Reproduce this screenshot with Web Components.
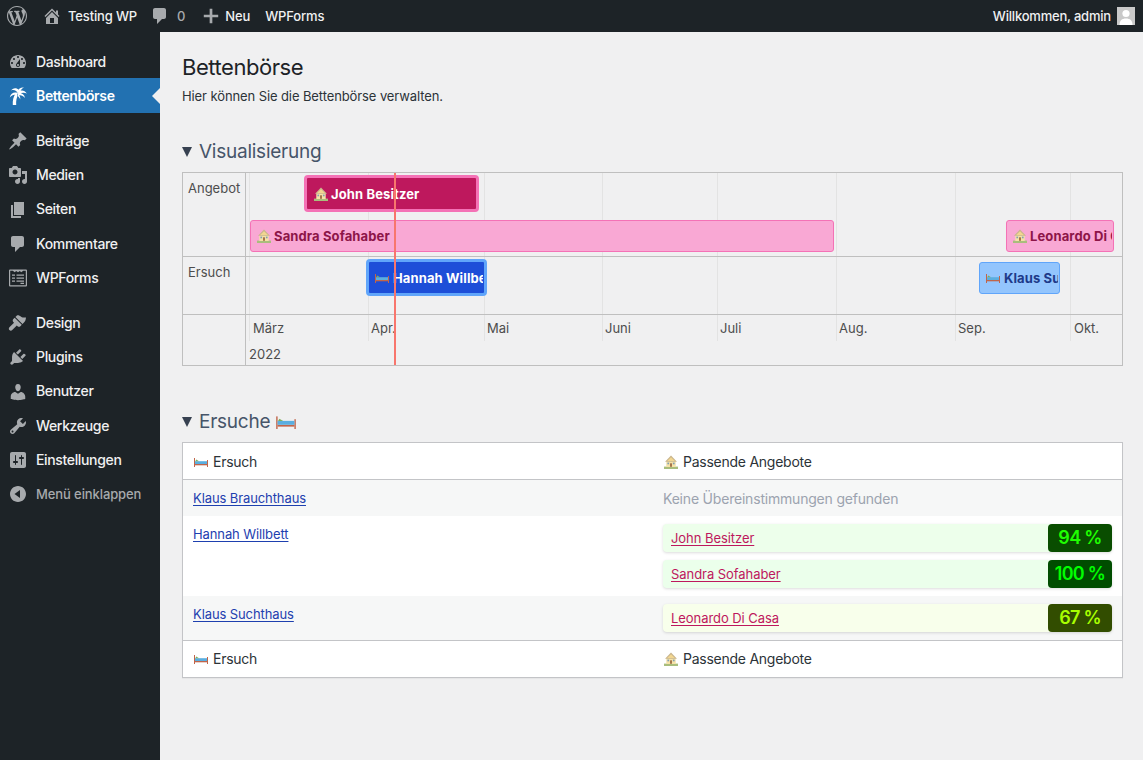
<!DOCTYPE html>
<html lang="de">
<head>
<meta charset="utf-8">
<title>Bettenbörse</title>
<style>
  html, body { margin: 0; padding: 0; height: 100%; }
  body { background: #f0f0f1; font-family: Inter, "Liberation Sans", sans-serif; overflow: hidden; }
</style>
</head>
<body>
<wp-admin-bar></wp-admin-bar>
<wp-shell>
  <wp-sidebar slot="side"></wp-sidebar>
  <page-head title="Bettenbörse" sub="Hier können Sie die Bettenbörse verwalten."></page-head>
  <fold-section label="Visualisierung" gap="34">
    <time-line></time-line>
  </fold-section>
  <fold-section label="Ersuche" bed gap="43">
    <request-table></request-table>
  </fold-section>
</wp-shell>

<script>
// dashicons, 20x20
const ICONS = {
    wp: 'M20 10c0-5.51-4.49-10-10-10C4.48 0 0 4.49 0 10c0 5.52 4.48 10 10 10 5.51 0 10-4.48 10-10zM7.78 15.37L4.37 6.22c.55-.02 1.17-.08 1.17-.08.5-.06.44-1.13-.06-1.11 0 0-1.45.11-2.37.11-.18 0-.37 0-.58-.01C4.12 2.69 6.87 1.11 10 1.11c2.33 0 4.45.87 6.05 2.34-.68-.11-1.65.39-1.65 1.58 0 .74.45 1.36.9 2.1.35.61.55 1.36.55 2.46 0 1.49-1.4 5-1.4 5l-3.03-8.37c.54-.02.82-.17.82-.17.5-.05.44-1.25-.06-1.22 0 0-1.44.12-2.38.12-.87 0-2.33-.12-2.33-.12-.5-.03-.56 1.2-.06 1.22l.92.08 1.26 3.41zM17.41 10c.24-.64.74-1.87.43-4.25.7 1.29 1.05 2.71 1.05 4.25 0 3.29-1.73 6.24-4.4 7.78.97-2.59 1.94-5.2 2.92-7.78zM6.1 18.09C3.12 16.65 1.11 13.53 1.11 10c0-1.3.23-2.48.72-3.59C3.25 10.3 4.67 14.2 6.1 18.09zm4.03-6.63l2.58 6.98c-.86.29-1.76.45-2.71.45-.79 0-1.57-.11-2.29-.33.81-2.38 1.62-4.74 2.42-7.1z',
    home: 'M16 8.5l1.53 1.53-1.06 1.06L10 4.62l-6.47 6.47-1.06-1.06L10 2.5l4 4v-2h2v4zm-6-2.46l6 5.99V18H4v-5.97zM12 17v-5H8v5h4z',
    comment: 'M5 2h9c1.1 0 2 .9 2 2v7c0 1.1-.9 2-2 2h-2l-5 5v-5H5c-1.1 0-2-.9-2-2V4c0-1.1.9-2 2-2z',
    plus: 'M18 8.5v3h-6.500V18h-3v-6.500H2v-3h6.500V2h3v6.500z',
    dashboard: 'M3.76 16h12.48c1.1-1.37 1.76-3.11 1.76-5 0-4.42-3.58-8-8-8s-8 3.58-8 8c0 1.89.66 3.63 1.76 5zM10 4c.55 0 1 .45 1 1s-.45 1-1 1-1-.45-1-1 .45-1 1-1zM6 6c.55 0 1 .45 1 1s-.45 1-1 1-1-.45-1-1 .45-1 1-1zm8 0c.55 0 1 .45 1 1s-.45 1-1 1-1-.45-1-1 .45-1 1-1zm-5.37 5.55L12 7v6c0 1.1-.9 2-2 2s-2-.9-2-2c0-.57.24-1.08.63-1.45zM4 10c.55 0 1 .45 1 1s-.45 1-1 1-1-.45-1-1 .45-1 1-1zm12 0c.55 0 1 .45 1 1s-.45 1-1 1-1-.45-1-1 .45-1 1-1zm-5 3c0-.55-.45-1-1-1s-1 .45-1 1 .45 1 1 1 1-.45 1-1z',
    palm: 'M7.600 7.500C5.400 10.600 4.500 14.600 4.800 19h3.400C7.900 15 8.600 11.200 10.400 8zM10 8C9 4.800 6 3.200 3 4.600 4.500 1.800 8.500 1.200 11 4zM9.500 7C6 5.800 2.600 7.400 1.800 11.500 3.500 9.300 6 8.200 9.500 8.500zM9.500 5.500C10.500 2.600 13 1 16 1.500 14 2.500 12.500 4 11.800 6.500zM10 5.800C13 3.800 16.800 4.200 18.800 7.500 16.500 6.500 13.500 6.600 11 8zM10 7C13 6.400 16.500 8 17 12 15.500 10 13 9 10.500 9zM9.500 8c1.800.7 3 2.800 2.800 5.500C11.500 11.800 10.500 10.300 9 9.500z',
    post: 'M10.44 3.02l1.82-1.82 6.36 6.35-1.83 1.82c-1.05-.68-2.48-.57-3.41.36l-.75.75c-.92.93-1.04 2.35-.35 3.41l-1.83 1.82-2.41-2.41-2.8 2.79c-.42.42-3.38 2.71-3.8 2.29s1.86-3.39 2.28-3.81l2.79-2.79L4.1 9.36l1.83-1.82c1.05.69 2.48.57 3.4-.36l.75-.75c.93-.92 1.05-2.35.36-3.41z',
    media: 'M13 11V4c0-.55-.45-1-1-1h-1.67L9 1H5L3.67 3H2c-.55 0-1 .45-1 1v7c0 .55.45 1 1 1h10c.55 0 1-.45 1-1zM7 4.5c1.38 0 2.5 1.12 2.5 2.5S8.38 9.5 7 9.5 4.5 8.38 4.5 7 5.62 4.5 7 4.5zM14 6h5v10.5c0 1.38-1.12 2.5-2.5 2.5S14 17.88 14 16.5s1.12-2.5 2.500-2.500c.17 0 .34.02.5.05V9h-3V6zm-4 8.05V13h2v3.500c0 1.38-1.12 2.5-2.5 2.5S7 17.88 7 16.5 8.12 14 9.500 14c.17 0 .34.02.5.05z',
    page: 'M6 15V2h10v13H6zm-1 1h8v2H3V5h2v11z',
    forms: 'M2 1.500h16A1 1 0 0 1 19 2.500v15a1 1 0 0 1-1 1H2a1 1 0 0 1-1-1v-15a1 1 0 0 1 1-1zm.2 1.200v14.600h15.600V2.700h-2.600l-1.900 1.600-1.500-1.300-1.800 1.300-1.800-1.300-1.500 1.300-1.900-1.600zM4 6.500h3v1.200H4zm4.500 0H16v1.200H8.500zM4 9.500h3v1.200H4zm4.500 0H16v1.200H8.500zM4 12.500h3v1.200H4zm4.500 0H16v1.200H8.500zM12.500 14.800H16V16h-3.500z',
    brush: 'M14.480 11.060L7.410 3.990l1.500-1.500c.500-.560 2.300-.470 3.540.860 1.230 1.330 3.030 1.330 5.550 1.050-.330 2.500-.670 3.500-2.020 5.160zM6.700 4.700l7.070 7.070-1.400 1.400c-.780.780-2.050.780-2.830 0l-.700-.700-4.600 4.600c-.780.780-2.050.780-2.830 0s-.780-2.050 0-2.830l4.600-4.600-.700-.700c-.780-.780-.780-2.050 0-2.830z',
    plugin: 'M13.110 4.360L9.870 7.600 8 5.730l3.240-3.240c.35-.34 1.050-.2 1.560.32.52.51.66 1.210.31 1.550zm-8 1.770l.91-1.120 9.010 9.010-1.190.84c-.71.71-2.630 1.160-3.820 1.160H6.140L4.900 17.260c-.59.59-1.540.59-2.120 0-.59-.58-.59-1.530 0-2.120l1.240-1.240v-3.880c0-1.130.4-3.190 1.090-3.890zm7.260 3.970l3.240-3.240c.34-.35 1.040-.21 1.550.31.52.51.66 1.210.31 1.550l-3.240 3.250z',
    user: 'M10 9.250c-2.270 0-2.730-3.440-2.730-3.440C7 4.020 7.820 2 9.970 2c2.160 0 2.980 2.020 2.710 3.810 0 0-.41 3.440-2.680 3.440zm0 2.570L12.720 10c2.390 0 4.520 2.330 4.520 4.530v2.490s-3.650 1.130-7.240 1.130c-3.650 0-7.240-1.130-7.240-1.130v-2.490c0-2.250 1.940-4.480 4.470-4.480z',
    tools: 'M16.680 9.770c-1.340 1.340-3.300 1.670-4.950.99l-5.410 6.520c-.99.99-2.590.99-3.580 0s-.99-2.59 0-3.570l6.520-5.420c-.68-1.650-.35-3.610.99-4.950 1.280-1.280 3.120-1.620 4.720-1.060l-2.890 2.890 2.820 2.820 2.860-2.870c.53 1.580.18 3.390-1.080 4.670zM3.810 16.210c.4.39 1.040.39 1.430 0 .4-.4.4-1.040 0-1.430-.39-.4-1.030-.4-1.430 0-.39.39-.39 1.030 0 1.430z',
    settings: 'M18 16V4c0-1.100-.9-2-2-2H4c-1.100 0-2 .9-2 2v12c0 1.100.9 2 2 2h12c1.100 0 2-.9 2-2zM8 11h1c.55 0 1 .45 1 1s-.45 1-1 1H8v1.500c0 .28-.22.5-.5.5s-.5-.22-.5-.5V13H6c-.55 0-1-.45-1-1s.45-1 1-1h1V5.500c0-.28.22-.5.5-.5s.5.22.5.5V11zm5-2h-1c-.55 0-1-.45-1-1s.45-1 1-1h1V5.500c0-.28.22-.5.5-.5s.5.22.5.5V7h1c.55 0 1 .45 1 1s-.45 1-1 1h-1v5.500c0 .28-.22.5-.5.5s-.5-.22-.5-.5V9z',
    collapse: 'M18 10c0-4.420-3.580-8-8-8s-8 3.580-8 8 3.580 8 8 8 8-3.580 8-8zm-6-4v8l-5.500-4z'
};

class DashIcon extends HTMLElement {
    connectedCallback() {
        const size = this.getAttribute('size') || 20;
        const name = this.getAttribute('name');
        // palm is built from overlapping fronds
        const rule = name === 'palm' ? 'nonzero' : 'evenodd';
        this.attachShadow({ mode: 'open' }).innerHTML = `
            <style>
                :host { display: inline-flex; flex: none; width: ${size}px; height: ${size}px; }
                svg { width: 100%; height: 100%; fill: currentColor; display: block; }
            </style>
            <svg viewBox="0 0 20 20"><path fill-rule="${rule}" d="${ICONS[name]}"/></svg>`;
    }
}
customElements.define('dash-icon', DashIcon);

// emoji stand-ins, no emoji font on the box
class EmojiHouse extends HTMLElement {
    connectedCallback() {
        this.attachShadow({ mode: 'open' }).innerHTML = `
            <style>
                :host { display: inline-block; flex: none; width: 14px; height: 14px; }
                svg { display: block; width: 100%; height: 100%; }
            </style>
            <svg viewBox="0 0 14 14">
                <rect x="0" y="11.600" width="14" height="2.400" fill="#a9bd7c"/>
                <rect x="2.300" y="6" width="9.400" height="6" fill="#f6e2a8"/>
                <path d="M7 .5 13 6.800H1z" fill="#c9b58d"/>
                <path d="M7 2.200 10.800 6H3.200z" fill="#f2d690"/>
                <rect x="6" y="8.300" width="2" height="3.500" fill="#a5764a"/>
                <rect x="3.400" y="7.600" width="1.700" height="1.700" fill="#7f9fb5"/>
                <rect x="8.900" y="7.600" width="1.700" height="1.700" fill="#7f9fb5"/>
            </svg>`;
    }
}
customElements.define('emoji-house', EmojiHouse);

class EmojiBed extends HTMLElement {
    connectedCallback() {
        this.attachShadow({ mode: 'open' }).innerHTML = `
            <style>
                :host { display: inline-block; flex: none; width: 14px; height: 10px; }
                svg { display: block; width: 100%; height: 100%; }
            </style>
            <svg viewBox="0 0 14 10">
                <rect x="0" y="1" width="1" height="9" fill="#c0654a"/>
                <rect x="13" y="3" width="1" height="7" fill="#c0654a"/>
                <rect x="1" y="7" width="12" height="1.300" fill="#c0654a"/>
                <rect x="1" y="4.200" width="12" height="2.800" fill="#5aaee0"/>
                <path d="M1.300 4.200 2.300 2.600 5 4.200z" fill="#7fae5a"/>
            </svg>`;
    }
}
customElements.define('emoji-bed', EmojiBed);

class WpAdminBar extends HTMLElement {
    constructor() {
        super();
        this.attachShadow({ mode: 'open' });
        this.shadowRoot.innerHTML = `
            <style>
                :host {
                    display: flex;
                    align-items: center;
                    height: 32px;
                    background: #1d2327;
                    color: #f0f0f1;
                    font: 500 13px/32px Inter, "Liberation Sans", sans-serif;
                    letter-spacing: -0.15px;
                }
                .item { display: flex; align-items: center; }
                dash-icon { color: #a7aaad; }
                .logo { margin-left: 7px; }
                .site { margin-left: 15px; gap: 6px; }
                .comments { margin-left: 13px; gap: 7px; color: #a7aaad; }
                .new { margin-left: 17px; gap: 5px; }
                .forms { margin-left: 15px; }
                .me { margin-left: auto; margin-right: 8px; gap: 6px; letter-spacing: -0.2px; }
                .avatar { width: 18px; height: 18px; background: #c9c9c9; overflow: hidden; }
                .avatar svg { display: block; width: 18px; height: 18px; fill: #fff; }
            </style>
            <div class="item logo"><dash-icon name="wp" size="20"></dash-icon></div>
            <div class="item site"><dash-icon name="home" size="20"></dash-icon><span>Testing WP</span></div>
            <div class="item comments"><dash-icon name="comment" size="20"></dash-icon><span>0</span></div>
            <div class="item new"><dash-icon name="plus" size="18"></dash-icon><span>Neu</span></div>
            <div class="item forms"><span>WPForms</span></div>
            <div class="item me"><span>Willkommen, admin</span>
                <div class="avatar"><svg viewBox="0 0 18 18"><circle cx="9" cy="6.500" r="3.600"/><path d="M2.500 18c0-4.500 2.500-6.500 6.500-6.500s6.500 2 6.500 6.500z"/></svg></div>
            </div>`;
    }
}
customElements.define('wp-admin-bar', WpAdminBar);

class WpMenuItem extends HTMLElement {
    constructor() {
        super();
        this.attachShadow({ mode: 'open' });
    }
    connectedCallback() {
        this.shadowRoot.innerHTML = `
            <style>
                :host {
                    display: flex;
                    align-items: center;
                    box-sizing: border-box;
                    height: 34.2px;
                    padding: 1px 0 0 8px;
                    color: #f0f0f1;
                    position: relative;
                    font: 500 14px/18.2px Inter, "Liberation Sans", sans-serif;
                    letter-spacing: -0.35px;
                }
                :host([current]) { background: #2271b1; color: #fff; font-weight: 600; }
                :host([current]) dash-icon { color: #fff; }
                :host([current])::after {
                    content: "";
                    position: absolute;
                    right: 0;
                    top: 50%;
                    margin-top: -8px;
                    border: 8px solid transparent;
                    border-right-color: #f0f0f1;
                    border-left-width: 0;
                }
                :host([dim]) { color: #a7aaad; font-size: 13px; letter-spacing: -0.1px; }
                dash-icon { color: #a7aaad; margin-right: 8px; }
            </style>
            <dash-icon name="${this.getAttribute('icon')}" size="20"></dash-icon><slot></slot>`;
    }
}
customElements.define('wp-menu-item', WpMenuItem);

class WpSidebar extends HTMLElement {
    constructor() {
        super();
        this.attachShadow({ mode: 'open' });
        this.shadowRoot.innerHTML = `
            <style>
                :host { display: block; padding-top: 12.25px; background: #1d2327; min-height: 728px; box-sizing: border-box; }
                .sep { height: 11px; }
            </style>
            <wp-menu-item icon="dashboard">Dashboard</wp-menu-item>
            <wp-menu-item icon="palm" current>Bettenbörse</wp-menu-item>
            <div class="sep"></div>
            <wp-menu-item icon="post">Beiträge</wp-menu-item>
            <wp-menu-item icon="media">Medien</wp-menu-item>
            <wp-menu-item icon="page">Seiten</wp-menu-item>
            <wp-menu-item icon="comment">Kommentare</wp-menu-item>
            <wp-menu-item icon="forms">WPForms</wp-menu-item>
            <div class="sep"></div>
            <wp-menu-item icon="brush">Design</wp-menu-item>
            <wp-menu-item icon="plugin">Plugins</wp-menu-item>
            <wp-menu-item icon="user">Benutzer</wp-menu-item>
            <wp-menu-item icon="tools">Werkzeuge</wp-menu-item>
            <wp-menu-item icon="settings">Einstellungen</wp-menu-item>
            <wp-menu-item icon="collapse" dim>Menü einklappen</wp-menu-item>`;
    }
}
customElements.define('wp-sidebar', WpSidebar);

class WpShell extends HTMLElement {
    constructor() {
        super();
        this.attachShadow({ mode: 'open' });
        this.shadowRoot.innerHTML = `
            <style>
                :host { display: grid; grid-template-columns: 160px 1fr; min-height: 728px; }
                main { padding: 0 20px 0 22px; min-width: 0; }
            </style>
            <slot name="side"></slot>
            <main><slot></slot></main>`;
    }
}
customElements.define('wp-shell', WpShell);

class PageHead extends HTMLElement {
    connectedCallback() {
        this.attachShadow({ mode: 'open' }).innerHTML = `
            <style>
                :host { display: block; padding-top: 20px; color: #1d2327; }
                h1 { margin: 0; font: 400 22px/30px Inter, "Liberation Sans", sans-serif; letter-spacing: -0.45px; }
                p { margin: 5px 0 0; font: 400 13px/18px Inter, "Liberation Sans", sans-serif; color: #2c3338; letter-spacing: -0.1px; }
            </style>
            <h1>${this.getAttribute('title')}</h1>
            <p>${this.getAttribute('sub')}</p>`;
    }
}
customElements.define('page-head', PageHead);

class FoldSection extends HTMLElement {
    connectedCallback() {
        const bed = this.hasAttribute('bed') ? '<emoji-bed class="bed"></emoji-bed>' : '';
        this.attachShadow({ mode: 'open' }).innerHTML = `
            <style>
                :host { display: block; margin-top: ${this.getAttribute('gap')}px; }
                .head {
                    display: flex;
                    align-items: center;
                    height: 24px;
                    padding-top: 1px;
                    margin-bottom: 8px;
                    color: #475569;
                    font: 400 19px/24px Inter, "Liberation Sans", sans-serif;
                    letter-spacing: -0.25px;
                }
                .tri { width: 10px; height: 10px; margin-right: 7px; background: #374151; clip-path: polygon(0 0, 100% 0, 50% 100%); }
                .bed { margin-left: 6px; width: 20px; height: 14px; }
            </style>
            <div class="head"><span class="tri"></span><span>${this.getAttribute('label')}</span>${bed}</div>
            <slot></slot>`;
    }
}
customElements.define('fold-section', FoldSection);

class TlBar extends HTMLElement {
    connectedCallback() {
        const kind = this.getAttribute('kind');
        const icon = kind.startsWith('offer') ? '<emoji-house></emoji-house>' : '<emoji-bed></emoji-bed>';
        this.attachShadow({ mode: 'open' }).innerHTML = `
            <style>
                :host {
                    position: absolute;
                    left: ${this.getAttribute('x')}px;
                    top: ${this.getAttribute('y')}px;
                    width: ${this.getAttribute('w')}px;
                    height: ${this.getAttribute('h')}px;
                    box-sizing: border-box;
                    border-radius: 3px;
                    overflow: hidden;
                    display: flex;
                    align-items: center;
                    font: 700 13px/16px Inter, "Liberation Sans", sans-serif;
                    letter-spacing: 0.12px;
                    white-space: nowrap;
                }
                :host([kind="offer"]) { background: #f9a8d4; border: 1px solid #f472b6; color: #8d1548; padding-left: 6px; }
                :host([kind="offer-on"]) { background: #be185d; border: 3px solid #f472b6; color: #fff; padding-left: 7px; border-radius: 4px; }
                :host([kind="req"]) { background: #93c5fd; border: 1px solid #60a5fa; color: #1e3a8a; padding-left: 6px; }
                :host([kind="req-on"]) { background: #1d4ed8; border: 3px solid #60a5fa; color: #fff; padding-left: 6px; border-radius: 4px; }
                .in { display: flex; align-items: center; gap: 3px; overflow: hidden; flex: 1; margin-right: 1px; }
                :host([kind^="req"]) .in { gap: 4px; }
            </style>
            <div class="in">${icon}<span><slot></slot></span></div>`;
    }
}
customElements.define('tl-bar', TlBar);

class TimeLine extends HTMLElement {
    constructor() {
        super();
        this.attachShadow({ mode: 'open' });
        // canvas coordinates: x from the left of the chart cell, y from its top
        const months = [['März', 3], ['Apr.', 122], ['Mai', 238], ['Juni', 356], ['Juli', 471], ['Aug.', 590], ['Sep.', 709], ['Okt.', 824]];
        const ticks = months.map(m => `<i class="tick" style="left:${m[1]}px"></i><span class="month" style="left:${m[1] + (m[0] === 'März' ? 4 : m[0] === 'Okt.' ? 4 : 3)}px">${m[0]}</span>`).join('');
        this.shadowRoot.innerHTML = `
            <style>
                :host {
                    display: grid;
                    grid-template-columns: 63px 1fr;
                    grid-template-rows: 84px 58px 50px;
                    position: relative;
                    box-sizing: border-box;
                    width: 941px;
                    height: 194px;
                    border: 1px solid #bfbfbf;
                    color: #4d4d4d;
                    font: 400 13px/16px Inter, "Liberation Sans", sans-serif;
                }
                .lab { padding: 7px 0 0 5px; border-right: 1px solid #bfbfbf; }
                .lab.line { border-bottom: 1px solid #bfbfbf; }
                .chart { grid-column: 2; grid-row: 1 / 4; position: relative; }
                .row-a, .row-b { position: absolute; left: 0; right: 0; border-bottom: 1px solid #bfbfbf; box-sizing: border-box; }
                .row-a { top: 0; height: 84px; }
                .row-b { top: 84px; height: 58px; }
                .tick { position: absolute; top: 0; height: 168px; width: 1px; background: #e3e3e3; }
                .month { position: absolute; top: 147px; }
                .year { position: absolute; left: 3px; top: 173px; }
                .now { position: absolute; left: 148px; top: 0; bottom: 0; width: 2px; background: #f8766d; z-index: 3; }
            </style>
            <div class="lab line">Angebot</div>
            <div class="lab line">Ersuch</div>
            <div class="lab"></div>
            <div class="chart">
                ${ticks}
                <div class="row-a"></div><div class="row-b"></div>
                <span class="year">2022</span>
                <tl-bar kind="offer-on" x="58" y="2" w="175" h="37">John Besitzer</tl-bar>
                <tl-bar kind="offer" x="4" y="47" w="584" h="32">Sandra Sofahaber</tl-bar>
                <tl-bar kind="offer" x="760" y="47" w="108" h="32">Leonardo Di Casa</tl-bar>
                <tl-bar kind="req-on" x="120" y="86" w="121" h="37">Hannah Willbett</tl-bar>
                <tl-bar kind="req" x="733" y="89" w="81" h="32">Klaus Suchthaus</tl-bar>
                <div class="now"></div>
            </div>`;
    }
}
customElements.define('time-line', TimeLine);

class MatchChip extends HTMLElement {
    connectedCallback() {
        const pct = +this.getAttribute('pct');
        // colours run from the match percentage on a green hue scale
        const hue = pct * 1.2;
        this.attachShadow({ mode: 'open' }).innerHTML = `
            <style>
                :host {
                    display: flex;
                    align-items: stretch;
                    justify-content: space-between;
                    height: 28px;
                    border-radius: 4px;
                    background: hsl(${hue}, 100%, 96%);
                    box-shadow: 0 1px 3px rgba(0,0,0,.14);
                    font: 400 13px/16px Inter, "Liberation Sans", sans-serif;
                    letter-spacing: -0.06px;
                }
                a { align-self: center; margin-left: 8px; color: #be185d; text-decoration: underline; text-underline-offset: 2px; text-decoration-thickness: 1px; }
                .pct {
                    display: flex;
                    align-items: center;
                    justify-content: center;
                    width: 64px;
                    border-radius: 4px;
                    background: hsl(${hue}, 100%, 15%);
                    color: hsl(${hue}, 100%, 50%);
                    font: 600 18px/28px Inter, "Liberation Sans", sans-serif;
                    letter-spacing: -0.7px;
                }
            </style>
            <a href="#"><slot></slot></a><span class="pct">${pct} %</span>`;
    }
}
customElements.define('match-chip', MatchChip);

class RequestRow extends HTMLElement {
    constructor() {
        super();
        this.attachShadow({ mode: 'open' });
        this.shadowRoot.innerHTML = `
            <style>
                :host {
                    display: grid;
                    grid-template-columns: 470px 1fr;
                    box-sizing: border-box;
                    font: 400 13px/16px Inter, "Liberation Sans", sans-serif;
                    letter-spacing: -0.1px;
                }
                :host([alt]) { background: #f6f7f7; }
                :host([head]) { background: #fff; font-size: 14px; line-height: 20px; color: #2c3338; letter-spacing: -0.25px; height: 37px; }
                :host([head]) .l, :host([head]) .r { padding-top: 8px; padding-bottom: 8px; }
                :host([head].top) .l, :host([head].top) .r { padding-top: 9px; }
                .l, .r { padding: 10px; min-width: 0; }
                :host([compact]) .r { padding: 8px 10px; display: flex; flex-direction: column; gap: 8px; }
            </style>
            <div class="l"><slot name="l"></slot></div>
            <div class="r"><slot></slot></div>`;
    }
}
customElements.define('request-row', RequestRow);

class ColHead extends HTMLElement {
    connectedCallback() {
        this.attachShadow({ mode: 'open' }).innerHTML = `
            <style>
                :host { display: flex; align-items: center; gap: 5px; height: 20px; padding-left: 1px; }
            </style>
            <slot></slot>`;
    }
}
customElements.define('col-head', ColHead);

class RequestTable extends HTMLElement {
    constructor() {
        super();
        this.attachShadow({ mode: 'open' });
        this.shadowRoot.innerHTML = `
            <style>
                :host {
                    display: block;
                    box-sizing: border-box;
                    width: 941px;
                    background: #fff;
                    border: 1px solid #c3c4c7;
                    box-shadow: 0 1px 1px rgba(0,0,0,.04);
                    color: #2c3338;
                }
                .top { border-bottom: 1px solid #c3c4c7; }
                .bot { border-top: 1px solid #c3c4c7; }
                .none { display: block; color: #9ca3af; font-size: 14px; line-height: 18px; margin-bottom: -2px; letter-spacing: -0.2px; }
                a { color: #1e40af; text-decoration: underline; text-underline-offset: 2px; text-decoration-thickness: 1px; }
            </style>
            <request-row head class="top"><col-head slot="l"><emoji-bed></emoji-bed>Ersuch</col-head><col-head><emoji-house></emoji-house>Passende Angebote</col-head></request-row>
            <request-row alt><a slot="l" href="#">Klaus Brauchthaus</a><span class="none">Keine Übereinstimmungen gefunden</span></request-row>
            <request-row compact><a slot="l" href="#">Hannah Willbett</a><match-chip pct="94">John Besitzer</match-chip><match-chip pct="100">Sandra Sofahaber</match-chip></request-row>
            <request-row alt compact><a slot="l" href="#">Klaus Suchthaus</a><match-chip pct="67">Leonardo Di Casa</match-chip></request-row>
            <request-row head class="bot"><col-head slot="l"><emoji-bed></emoji-bed>Ersuch</col-head><col-head><emoji-house></emoji-house>Passende Angebote</col-head></request-row>`;
    }
}
customElements.define('request-table', RequestTable);
</script>
</body>
</html>
